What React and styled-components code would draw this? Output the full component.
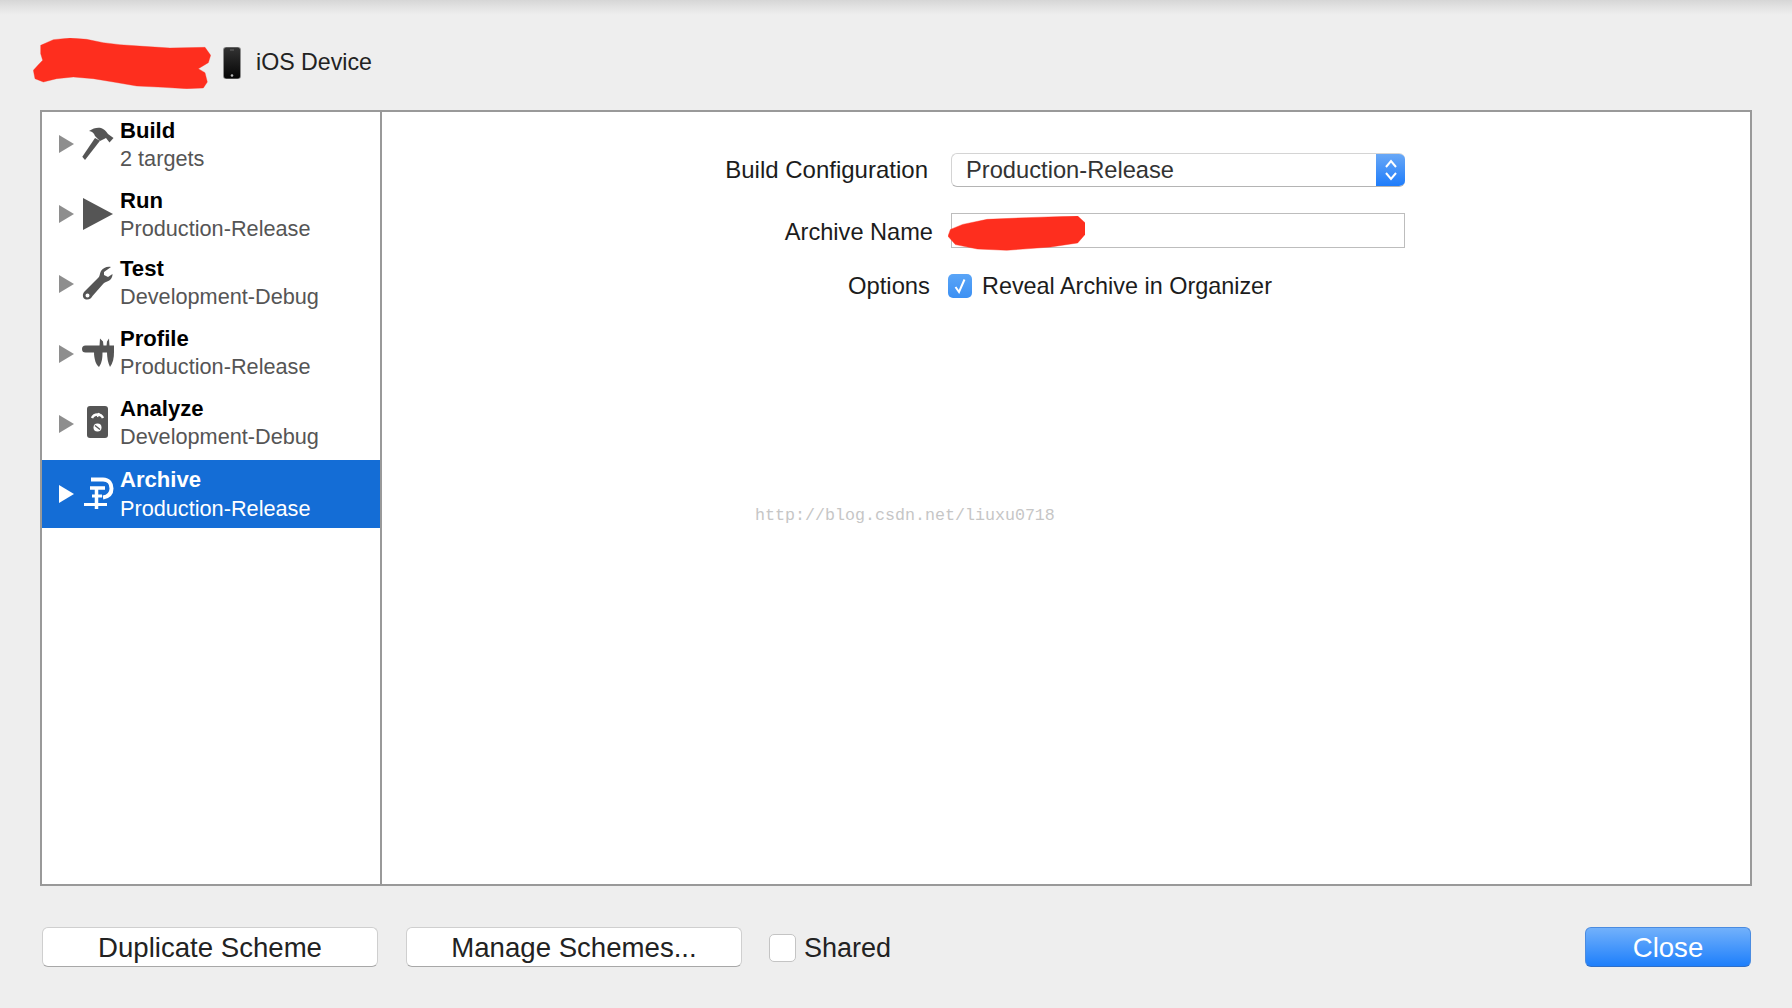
import React from "react";
import styled, { createGlobalStyle } from "styled-components";

const Global = createGlobalStyle`
    html, body {
        margin: 0;
        background: #eeeeee;
    }
    * {
        box-sizing: border-box;
    }
`;

const Page = styled.div`
    width: 1792px;
    height: 1008px;
    overflow: hidden;
    padding: 38px 40px 0;
    color: #222;
    font-family: "Liberation Sans", Arial, sans-serif;
    background: linear-gradient(to bottom, #d6d6d6 0, #e4e4e4 8px, #eeeeee 15px);
`;

const Header = styled.div`
    display: flex;
    align-items: center;
    height: 51px;
    margin-left: -7px;
`;

const Scribble = styled.svg`
    display: block;
    flex: none;
    fill: #fe2e1e;
    stroke: #fe2e1e;
    stroke-linejoin: round;
`;

const Phone = styled.svg`
    display: block;
    margin: -2px 0 0 12px;
`;

const Destination = styled.span`
    margin: -2px 0 0 15px;
    font-size: 23.2px;
`;

const Panel = styled.div`
    display: flex;
    height: 776px;
    margin-top: 21px;
    background: #fff;
    border: 2px solid #999;
`;

const Sidebar = styled.div`
    flex: none;
    width: 340px;
    border-right: 2px solid #999;
`;

const Row = styled.div`
    display: flex;
    align-items: center;
    height: ${(p) => (p.$selected ? "68px" : "70px")};
    margin-top: ${(p) => (p.$selected ? "-2px" : "0")};
    padding: ${(p) => (p.$selected ? "0 0 0 17px" : "0 0 6px 17px")};
    color: ${(p) => (p.$selected ? "#fff" : "#555")};
    background: ${(p) => (p.$selected ? "#146dd6" : "transparent")};
`;

const Disclosure = styled.span`
    flex: none;
    width: 0;
    height: 0;
    border-style: solid;
    border-width: 9px 0 9px 15px;
    border-color: transparent transparent transparent
        ${(p) => (p.$selected ? "#fff" : "#8e8e8e")};
`;

const ActionIcon = styled.svg`
    display: block;
    flex: none;
    width: 32px;
    height: 36px;
    margin: 0 6px 0 8px;
    color: inherit;
`;

const RowText = styled.div`
    display: flex;
    flex-direction: column;
    margin-top: ${(p) => p.$shift}px;
    line-height: ${(p) => (p.$selected ? "29px" : "28px")};
    font-size: 21.7px;
`;

const RowTitle = styled.span`
    font-size: 22.1px;
    font-weight: 700;
    color: ${(p) => (p.$selected ? "#fff" : "#000")};
`;

const Detail = styled.div`
    position: relative;
    flex: 1;
    padding-top: 41px;
`;

const Form = styled.div`
    display: grid;
    grid-template-columns: 569px 454px;
    grid-auto-rows: min-content;
    row-gap: 26px;
    align-items: center;
    font-size: 23.6px;
    color: #1c1c1c;
`;

const Label = styled.div`
    margin-top: ${(p) => p.$drop || 0}px;
    padding-right: ${(p) => p.$gap}px;
    text-align: right;
    font-size: ${(p) => p.$size || 23.6}px;
`;

const Select = styled.div`
    display: flex;
    align-items: center;
    height: 34px;
    padding-left: 14px;
    overflow: hidden;
    background: #fff;
    border: 1px solid #d4d4d4;
    border-bottom-color: #b4b4b4;
    border-right: 0;
    border-radius: 6px;
    color: #333;
`;

const SelectValue = styled.span`
    flex: 1;
    font-size: 23.7px;
`;

const Stepper = styled.div`
    display: flex;
    align-items: center;
    justify-content: center;
    width: 29px;
    height: 34px;
    background: linear-gradient(to bottom, #6ba9f6, #1c7bfb);
`;

const InputBox = styled.div`
    position: relative;
    height: 35px;
    background: #fff;
    border: 1px solid #bdbdbd;
`;

const NameScribble = styled(Scribble)`
    position: absolute;
    left: -4px;
    top: 2px;
`;

const OptionRow = styled.div`
    display: flex;
    align-items: center;
    height: 24px;
    margin: -2px 0 0 -3px;
    font-size: 23.4px;
`;

const Check = styled.div`
    display: flex;
    align-items: center;
    justify-content: center;
    flex: none;
    width: 24px;
    height: 24px;
    margin-right: 10px;
    border-radius: 5px;
    background: linear-gradient(to bottom, #5aa5f7, #3c90f3);
`;

const Watermark = styled.div`
    position: absolute;
    left: 373px;
    top: 393px;
    font-family: "Liberation Mono", monospace;
    font-size: 16.67px;
    line-height: 22px;
    color: #c6c6c6;
`;

const Footer = styled.div`
    display: flex;
    align-items: center;
    height: 40px;
    margin-top: 41px;
    padding: 0 1px 0 2px;
    font-size: 27.6px;
`;

const Button = styled.div`
    display: flex;
    align-items: center;
    justify-content: center;
    width: ${(p) => (p.$primary ? "166px" : "336px")};
    height: 40px;
    margin-right: ${(p) => p.$after || 0}px;
    margin-left: ${(p) => (p.$primary ? "auto" : "0")};
    padding-top: 1px;
    border: 1px solid ${(p) => (p.$primary ? "#4a8be0" : "#cfcfcf")};
    border-bottom-color: ${(p) => (p.$primary ? "#2f6fc8" : "#a8a8a8")};
    border-radius: 6px;
    color: ${(p) => (p.$primary ? "#fff" : "#222")};
    background: ${(p) =>
        p.$primary ? "linear-gradient(to bottom, #72b1fb, #1e7ffb)" : "#fff"};
`;

const SharedBox = styled.div`
    width: 27px;
    height: 28px;
    margin: 2px 8px 0 0;
    background: #fff;
    border: 1px solid #c4c4c4;
    border-radius: 5px;
`;

const SharedLabel = styled.span`
    margin-top: 2px;
    font-size: 27px;
    color: #222;
`;

const HammerIcon = () => (
    <ActionIcon viewBox="0 -2 32 36" fill="currentColor">
        <path d="M0.300 28.700 13 10 18 12.700 3 32Z" />
        <path d="M7 3C11 0 16-1 19 0 22 1 24 3 26 6L31.500 10 27.500 14.500 24 10 18 13 13 8C12 5 10 3.500 7 3Z" />
    </ActionIcon>
);

const RunIcon = () => (
    <ActionIcon viewBox="0 -2 32 36" fill="currentColor">
        <path d="M1 0 31 16 1 32Z" />
    </ActionIcon>
);

const WrenchIcon = () => (
    <ActionIcon viewBox="0 0 32 36" fill="currentColor">
        <path
            fillRule="evenodd"
            d="M29 1C25 0 21 2 19 5 17.500 8 18 10 16.500 11.500L2.500 25.500C-0.500 29 1 33 4 33.500 7.500 34 9.500 32 10.500 30L21.500 17.500C23 15.500 26 16 28 14 30 12 30.500 10 30.500 8L26 11 22 9 22 6ZM5.500 27.500A2 2 0 1 1 5.500 31.500 2 2 0 1 1 5.500 27.500Z"
        />
    </ActionIcon>
);

const CaliperIcon = () => (
    <ActionIcon viewBox="0 -2 32 36" fill="currentColor">
        <path d="M3.500 7.500H32V14.500H3.500A3.500 3.500 0 0 1 3.500 7.500Z" />
        <path d="M12 14H20.500C20.500 20 20 25 17 29 14 27 12 21 12 14Z" />
        <path d="M25 14H32C32 20 31 25 28 29 26 25 25 20 25 14Z" />
        <path d="M17.500 8 18 0.500 21 3.500 21.500 8ZM24.500 8 25 3.500 27 0.500 27.500 8Z" />
    </ActionIcon>
);

const AnalyzeIcon = () => (
    <ActionIcon viewBox="0 -2 32 36">
        <rect x="5" y="-2" width="21" height="32" rx="3" fill="currentColor" />
        <path d="M10 10A6 6 0 0 1 21 10" fill="none" stroke="#fff" strokeWidth="2.500" />
        <path d="M15.500 9 17 5" stroke="#fff" strokeWidth="1.500" />
        <circle cx="15.500" cy="19.500" r="4" fill="#fff" />
        <path d="M13 17.500 18 21.500" stroke="currentColor" strokeWidth="1.500" />
    </ActionIcon>
);

const ArchiveIcon = () => (
    <ActionIcon viewBox="0 -2 32 36" fill="none" stroke="currentColor">
        <path d="M9 1.500H21C27 1.500 29.500 6 29.500 10.500 29.500 15 27 18.500 21 19.500" strokeWidth="4" />
        <path d="M8 10H23" strokeWidth="3.500" />
        <path d="M10 18H20" strokeWidth="3" />
        <path d="M14.500 11V31" strokeWidth="3.500" />
        <path d="M2 26.500H25" strokeWidth="3" />
    </ActionIcon>
);

const actions = [
    { name: "Build", detail: "2 targets", Icon: HammerIcon, shift: 1 },
    { name: "Run", detail: "Production-Release", Icon: RunIcon, shift: 1 },
    { name: "Test", detail: "Development-Debug", Icon: WrenchIcon, shift: -3 },
    { name: "Profile", detail: "Production-Release", Icon: CaliperIcon, shift: -3 },
    { name: "Analyze", detail: "Development-Debug", Icon: AnalyzeIcon, shift: -3 },
    { name: "Archive", detail: "Production-Release", Icon: ArchiveIcon, shift: 0, selected: true },
];

const App = () => (
    <Page>
        <Global />
        <Header>
            <Scribble width="178" height="51" viewBox="40 38 532 153">
                <path d="M62 60 100 43 150 38 200 42 250 52 300 58 370 63 450 68 555 66 572 90 565 112 535 130 555 142 562 170 550 188 500 190 430 186 350 182 280 170 220 160 160 155 110 160 70 170 45 160 40 135 55 118 68 105 62 85Z" />
            </Scribble>
            <Phone width="18" height="32" viewBox="0 0 18 32">
                <defs>
                    <linearGradient id="glass" x1="0" y1="0" x2="0" y2="1">
                        <stop offset="0" stopColor="#333" />
                        <stop offset="1" stopColor="#050505" />
                    </linearGradient>
                </defs>
                <rect width="18" height="32" rx="3" fill="#8d8d8d" />
                <rect x="1" y="0.500" width="16" height="31" rx="2.500" fill="url(#glass)" />
                <rect x="7" y="2.500" width="4" height="1" fill="#666" />
                <circle cx="9" cy="28.500" r="1.300" fill="#bbb" />
            </Phone>
            <Destination>iOS Device</Destination>
        </Header>
        <Panel>
            <Sidebar>
                {actions.map(({ name, detail, Icon, shift, selected }) => (
                    <Row key={name} $selected={selected}>
                        <Disclosure $selected={selected} />
                        <Icon />
                        <RowText $shift={shift} $selected={selected}>
                            <RowTitle $selected={selected}>{name}</RowTitle>
                            <span>{detail}</span>
                        </RowText>
                    </Row>
                ))}
            </Sidebar>
            <Detail>
                <Form>
                    <Label $gap={23} $size={24}>Build Configuration</Label>
                    <Select>
                        <SelectValue>Production-Release</SelectValue>
                        <Stepper>
                            <svg width="14" height="24" viewBox="0 0 14 24" fill="none" stroke="#fff" strokeWidth="2">
                                <path d="M2 9 7 3 12 9M2 15 7 21 12 15" />
                            </svg>
                        </Stepper>
                    </Select>
                    <Label $gap={18} $drop={4}>Archive Name</Label>
                    <InputBox>
                        <NameScribble width="137" height="35" viewBox="0 0 280 104" preserveAspectRatio="none">
                            <path d="M5 40 30 25 80 10 160 5 265 0 280 20 280 55 265 80 210 92 120 102 60 98 15 85 0 60Z" />
                        </NameScribble>
                    </InputBox>
                    <Label $gap={21} $drop={-2} $size={23.8}>Options</Label>
                    <OptionRow>
                        <Check>
                            <svg width="14" height="16" viewBox="0 0 14 16" fill="none" stroke="#fff" strokeWidth="2">
                                <path d="M2.500 9 6 14 11.500 1.500" />
                            </svg>
                        </Check>
                        Reveal Archive in Organizer
                    </OptionRow>
                </Form>
                <Watermark>http://blog.csdn.net/liuxu0718</Watermark>
            </Detail>
        </Panel>
        <Footer>
            <Button $after={28}>Duplicate Scheme</Button>
            <Button $after={27}>Manage Schemes...</Button>
            <SharedBox />
            <SharedLabel>Shared</SharedLabel>
            <Button $primary>Close</Button>
        </Footer>
    </Page>
);

export default App;
